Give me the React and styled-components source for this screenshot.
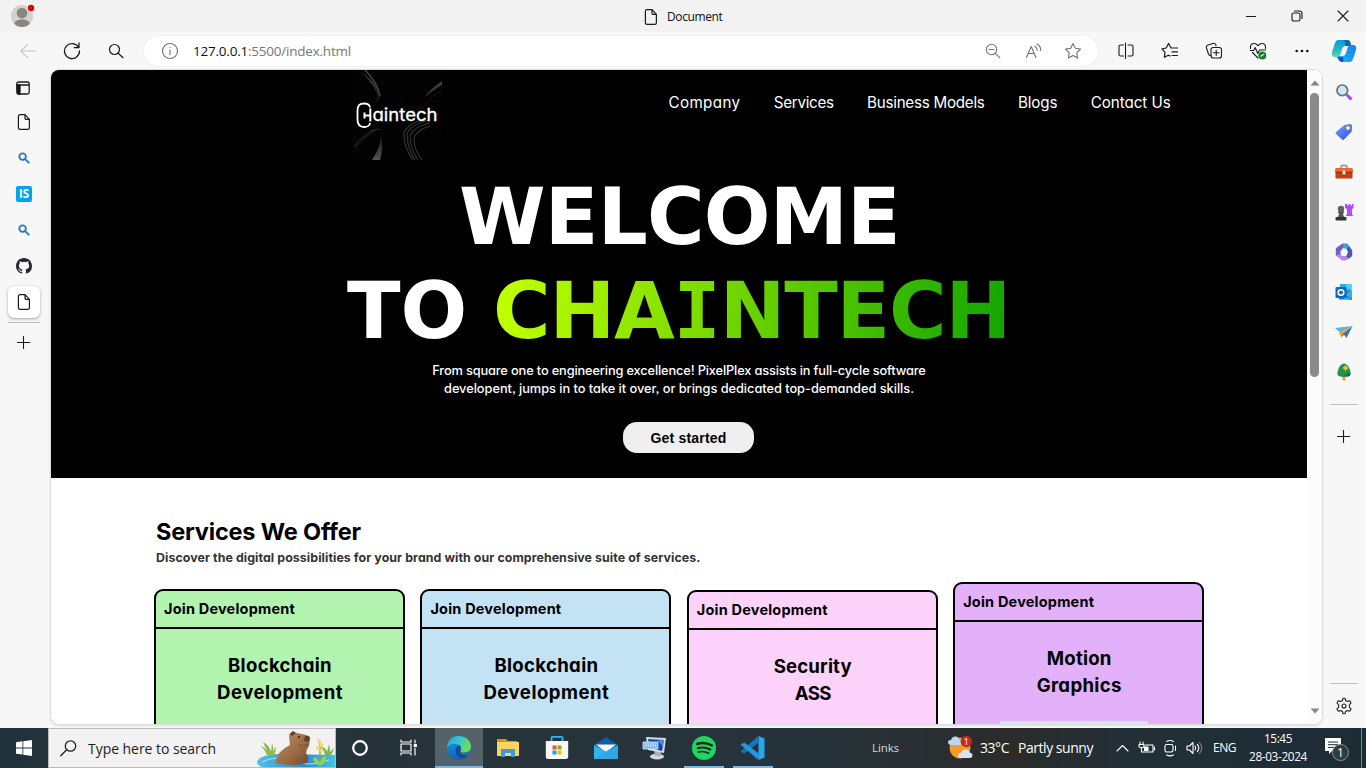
import React, { useLayoutEffect, useRef, useState } from "react";
import styled, { createGlobalStyle, css } from "styled-components";

const GlobalStyle = createGlobalStyle`
  * { box-sizing: border-box; }
  html, body { margin: 0; padding: 0; }
  body { width: 1366px; height: 768px; overflow: hidden; background: #f7f7f7; }
  svg { display: block; flex: none; }
`;

const uiFont = `"Open Sans", "Noto Sans", sans-serif`;
const siteFont = `Inter, "Open Sans", sans-serif`;

/* Text whose tracking is adjusted so that the run takes a given width. */
const Run = styled.span`
  display: inline-block;
  white-space: nowrap;
`;
function Fit({ w, children, ...rest }) {
  const ref = useRef(null);
  const [spacing, setSpacing] = useState(0);
  useLayoutEffect(() => {
    const el = ref.current;
    el.style.letterSpacing = "0px";
    const natural = el.getBoundingClientRect().width;
    setSpacing((w - natural) / el.textContent.length);
  }, [w]);
  return (
    <Run ref={ref} style={{ letterSpacing: `${spacing}px` }} {...rest}>
      {children}
    </Run>
  );
}

const Screen = styled.div`
  width: 1366px;
  height: 768px;
  display: flex;
  flex-direction: column;
  overflow: hidden;
  font-family: ${uiFont};
  color: #111;
`;

/* ---------- Browser chrome ---------- */
const TitleBar = styled.header`
  height: 32px;
  background: #f2f2f2;
  display: grid;
  grid-template-columns: 644px 1fr auto;
  align-items: center;
`;
const Profile = styled.div`
  padding-left: 10px;
`;
const TabTitle = styled.div`
  display: flex;
  align-items: center;
  gap: 9px;
  font-size: 12px;
  line-height: 16px;
  padding-top: 1px;
`;
const WindowButtons = styled.div`
  display: flex;
`;
const Slot = styled.div`
  width: ${(p) => p.$w || 44}px;
  height: ${(p) => p.$h || 32}px;
  display: flex;
  flex: none;
  align-items: center;
  justify-content: center;
`;
const Toolbar = styled.div`
  height: 38px;
  background: #f7f7f7;
  display: flex;
  align-items: center;
  padding-left: 6px;
`;
const AddressBar = styled.div`
  width: 954px;
  height: 30px;
  margin: 0 6px;
  border-radius: 15px;
  background: #fff;
  box-shadow: 0 0 2px rgba(0, 0, 0, 0.08);
  display: flex;
  align-items: center;
  padding: 0 5px 0 17px;
`;
const Url = styled.div`
  flex: 1;
  padding-left: 14px;
  font-size: 13.5px;
  line-height: 20px;
  color: #767676;
  b { font-weight: 400; color: #111; }
`;
const Middle = styled.div`
  height: 658px;
  background: #f7f7f7;
  display: flex;
`;
const LeftRail = styled.nav`
  width: 51px;
  padding: 2px 0 0 6px;
`;
const TabSlot = styled.div`
  width: ${(p) => p.$w || 36}px;
  height: ${(p) => p.$h || 36}px;
  display: flex;
  align-items: center;
  justify-content: center;
`;
const ActiveTab = styled.div`
  width: 32px;
  height: 32px;
  border-radius: 6px;
  background: #fff;
  box-shadow: 0 1px 3px rgba(0, 0, 0, 0.35);
  display: flex;
  align-items: center;
  justify-content: center;
`;
const RailLine = styled.div`
  width: ${(p) => p.$w}px;
  height: 1px;
  flex: none;
  background: #bdbdbd;
  margin: ${(p) => p.$m};
`;
const SiteBadge = styled.div`
  width: 16px;
  height: 16px;
  border-radius: 2px;
  background: #03a4ee;
  color: #fff;
  font: 700 11.5px/16px ${uiFont};
  text-align: center;
`;
const RightRail = styled.aside`
  width: 43px;
  padding-top: 2px;
  display: flex;
  flex-direction: column;
  align-items: center;
`;
const RailGap = styled.div`
  flex: 1;
`;
const Viewport = styled.main`
  width: 1271px;
  height: 654px;
  flex: none;
  border-radius: 8px;
  background: #fff;
  box-shadow: 0 0 0 1px #dedede, 0 1px 3px rgba(0, 0, 0, 0.2);
  display: flex;
  overflow: hidden;
`;
const ScrollTrack = styled.div`
  width: 15px;
  background: #fcfcfc;
  display: flex;
  flex-direction: column;
  align-items: center;
  padding: 10px 0 10px;
`;
const Thumb = styled.div`
  width: 9px;
  height: 284px;
  margin-top: 7px;
  border-radius: 5px;
  background: #8b8b8b;
`;

/* ---------- Web page ---------- */
const Page = styled.div`
  width: 1256px;
  height: 654px;
  overflow: hidden;
  font-family: ${siteFont};
  font-feature-settings: "cv11", "ss03";
  color: #000;
`;
const Hero = styled.section`
  height: 408px;
  background: #000;
  color: #fff;
`;
const HeroTop = styled.div`
  height: 90px;
  display: flex;
  padding-left: 300px;
`;
const SiteNav = styled.nav`
  display: flex;
  gap: 33.3px;
  padding: 23px 0 0 226.5px;
  font-size: 15.2px;
  line-height: 20px;
`;
const Headline = styled.h1`
  margin: 10px 0 0;
  font: 700 78.5px/94px "DejaVu Sans", sans-serif;
  text-align: left;
`;
const HeadLine = styled.div`
  height: 94px;
  padding-left: ${(p) => p.$x}px;
  white-space: nowrap;
`;
const Gradient = styled.span`
  display: inline-block;
  margin-left: ${(p) => p.$gap || 0}px;
  background: linear-gradient(98deg, #bfff00 3%, #66d000 52%, #10a400 100%);
  background-clip: text;
  -webkit-background-clip: text;
  color: transparent;
`;
const SerifI = styled.span`
  font-family: "DejaVu Sans Mono", monospace;
`;
const Lead = styled.p`
  margin: 4px 0 0;
  font-size: 12.8px;
  font-weight: 500;
  line-height: 18px;
  text-align: center;
`;
const HeroAction = styled.div`
  padding: 24px 0 0 572px;
`;
const StartButton = styled.button`
  display: block;
  width: 131px;
  height: 31px;
  padding: 1px 0 0;
  border: 0;
  border-radius: 14px;
  background: #efefef;
  color: #000;
  font: 700 14px/30px "Liberation Sans", Arial, sans-serif;
`;
const Services = styled.section`
  padding: 36px 0 0 103px;
`;
const ServicesTitle = styled.h2`
  margin: 0 0 0 2px;
  font-size: 23.5px;
  font-weight: 700;
  line-height: 36px;
`;
const ServicesText = styled.p`
  margin: -1px 0 0 2px;
  font-size: 12.4px;
  font-weight: 700;
  line-height: 18px;
  color: #333;
`;
const Cards = styled.div`
  display: flex;
  gap: 15.4px;
  padding-top: 15px;
`;
const Card = styled.article`
  width: 251px;
  height: 240px;
  flex: none;
  margin-top: ${(p) => p.$top}px;
  border: 2px solid #000;
  border-radius: 9px;
  background: ${(p) => p.$bg};
`;
const CardHead = styled.div`
  height: 38px;
  padding: 0 0 0 8px;
  border-bottom: 2px solid #000;
  font-size: 14.5px;
  font-weight: 700;
  line-height: 36px;
`;
const CardBody = styled.div`
  padding: 23px 0 0 1px;
  font-size: 18.6px;
  font-weight: 700;
  line-height: 27px;
  text-align: center;
`;
const CardImage = styled.div`
  width: 148px;
  height: 40px;
  margin: 22px 0 0 45px;
  background: linear-gradient(90deg, #cde8f8, #d3e6fd);
`;

/* ---------- Taskbar ---------- */
const Taskbar = styled.footer`
  height: 40px;
  background: linear-gradient(90deg, #22323b 0%, #27343a 35%, #26333a 60%, #2b2b2a 74%, #222f36 82%, #1c2c35 100%);
  color: #fff;
  display: flex;
  align-items: stretch;
`;
const TaskSearch = styled.div`
  width: 288px;
  border: 1px solid #b9b9b9;
  background: #f2f2f2;
  color: #222;
  display: flex;
  align-items: center;
  padding-left: 11px;
  font-size: 14px;
  svg + span { margin-left: 11px; }
  span + svg { margin-left: auto; }
`;
const TaskSlot = styled.div`
  width: ${(p) => p.$w || 49}px;
  height: 40px;
  flex: none;
  display: flex;
  align-items: center;
  justify-content: center;
  ${(p) => p.$active && css`background: #566269;`}
`;
const TaskInner = styled.div`
  width: ${(p) => p.$line || 48}px;
  height: 40px;
  display: flex;
  align-items: center;
  justify-content: center;
  border-bottom: 2px solid ${(p) => (p.$line ? "#76b9ed" : "transparent")};
  padding-top: 2px;
`;
const Tray = styled.div`
  flex: 1;
  display: flex;
  align-items: center;
  padding-left: 95px;
  font-size: 12px;
`;
const TrayItem = styled.div`
  margin-left: ${(p) => p.$ml || 0}px;
  font-size: ${(p) => p.$size || 12}px;
  line-height: 18px;
  color: ${(p) => p.$color || "#fff"};
  text-align: center;
`;
const Clock = styled(TrayItem)`
  padding-bottom: 2px;
`;
const ShowDesktop = styled.div`
  width: 5px;
  height: 40px;
  margin-left: auto;
  border-left: 1px solid #76848b;
`;

/* ---------- Icons ---------- */
const Svg = ({ w = 16, h = w, vb = `0 0 ${w} ${h}`, c = "#1b1b1b", s = 1.1, children }) => (
  <svg width={w} height={h} viewBox={vb} fill="none" stroke={c} strokeWidth={s} strokeLinecap="round" strokeLinejoin="round">
    {children}
  </svg>
);
const DocIcon = ({ w = 14 }) => (
  <Svg w={w} h={16} vb="0 0 14 16" s={1.2}>
    <path d="M3 .7h5l4.4 4.6v8.4q0 1.6-1.6 1.6H3q-1.6 0-1.6-1.6V2.3Q1.4.7 3 .7ZM8 .9v3.2q0 1.3 1.3 1.3h3" />
  </Svg>
);
const BlueSearch = () => (
  <Svg w={12} c="#1f74cf" s={1.8}><circle cx="4.6" cy="4.6" r="3.3" /><path d="m7.2 7.2 3.6 3.4" /></Svg>
);
const Plus = () => <Svg w={13} s={1.1}><path d="M6.5.5v12M.5 6.500h12" /></Svg>;
const Arrow = ({ down }) => (
  <svg width="10" height="6" viewBox="0 0 10 6"><path d={down ? "M.5.5h9L5 5.5Z" : "M.5 5.5h9L5 .5Z"} fill="#868686" /></svg>
);
const Avatar = () => (
  <svg width="26" height="26" viewBox="0 0 26 26">
    <defs><clipPath id="face"><circle cx="12" cy="13" r="11" /></clipPath></defs>
    <circle cx="12" cy="13" r="11" fill="#d3d0cd" />
    <g clipPath="url(#face)" fill="#8b8580"><circle cx="12" cy="10" r="5.3" /><ellipse cx="12" cy="21.8" rx="8" ry="5.6" /></g>
    <circle cx="21" cy="5" r="4" fill="#f2f2f2" /><circle cx="21" cy="5" r="3.2" fill="#e3000b" />
  </svg>
);
const Github = () => (
  <svg width="16" height="16" viewBox="0 0 16 16" fill="#24292f">
    <path d="M8 0C3.58 0 0 3.58 0 8c0 3.54 2.29 6.53 5.47 7.59.4.07.55-.17.55-.38 0-.19-.01-.82-.01-1.49-2.01.37-2.53-.49-2.69-.94-.09-.23-.48-.94-.82-1.13-.28-.15-.68-.52-.01-.53.63-.01 1.08.58 1.23.82.72 1.21 1.87.87 2.33.66.07-.52.28-.87.51-1.07-1.78-.2-3.64-.89-3.64-3.95 0-.87.31-1.59.82-2.15-.08-.2-.36-1.02.08-2.12 0 0 .67-.21 2.2.82a7.6 7.6 0 0 1 4 0c1.53-1.04 2.2-.82 2.2-.82.44 1.1.16 1.92.08 2.12.51.56.82 1.27.82 2.15 0 3.07-1.87 3.75-3.65 3.95.29.25.54.73.54 1.48 0 1.07-.01 1.93-.01 2.2 0 .21.15.46.55.38A8 8 0 0 0 16 8c0-4.42-3.58-8-8-8Z" />
  </svg>
);
const Copilot = () => (
  <svg width="26" height="24" viewBox="0 0 26 24">
    <defs>
      <linearGradient id="cpA" x1="0" y1="0" x2="0" y2="1"><stop stopColor="#1399d8" /><stop offset=".55" stopColor="#20b8c7" /><stop offset="1" stopColor="#62d493" /></linearGradient>
      <linearGradient id="cpB" x1="1" y1="0" x2="0" y2="1"><stop stopColor="#157fea" /><stop offset=".6" stopColor="#1d9df4" /><stop offset="1" stopColor="#20c4f2" /></linearGradient>
    </defs>
    <path d="M7 1h9q3 0 3.5 3l.8 3H14q-2 0-3 3l-1.500 5q-1 3-3.500 3H4q-4 0-3-5L4 4q.8-3 3-3Z" fill="url(#cpA)" />
    <path d="M12 1h4q3 0 3.500 3l.8 3H14q1-5-2-6Z" fill="#1165a8" />
    <path d="M19 6h3q4 0 3 5l-3 9q-.8 3-3 3h-8q-3 0-3.500-3L7 17h5q2 0 3-3l1.500-5q.8-3 2.500-3Z" fill="url(#cpB)" />
    <path d="M6 18h6q1 3 0 5-3 0-4-2Z" fill="#1b45d4" />
  </svg>
);
const SideSearch = () => (
  <svg width="18" height="18" viewBox="0 0 18 18">
    <path d="m11 11 2 2" stroke="#777" strokeWidth="2" />
    <path d="m12.800 12.800 2.700 2.700" stroke="#b63df0" strokeWidth="3" strokeLinecap="round" />
    <circle cx="7.300" cy="7.300" r="5.300" fill="#c9e9fb" stroke="#6e6e6e" strokeWidth="1.700" />
  </svg>
);
const TagIcon = () => (
  <svg width="18" height="18" viewBox="0 0 18 18">
    <defs><linearGradient id="tg" x1="0" y1="0" x2="1" y2="1"><stop stopColor="#6aa8ff" /><stop offset="1" stopColor="#3549ec" /></linearGradient></defs>
    <path d="M9.500 2 15 1q2 0 2 2l-.3 5.500L9 16.500q-1 1-2 0L1 11q-1-1 0-2Z" fill="url(#tg)" /><circle cx="13" cy="5" r="1.800" fill="#fff" stroke="#f7c42b" />
  </svg>
);
const Toolbox = () => (
  <svg width="18" height="16" viewBox="0 0 18 16">
    <path d="M6 4V2.500Q6 1.500 7 1.500h4q1 0 1 1V4" fill="none" stroke="#8b8b8b" strokeWidth="1.300" />
    <rect x=".5" y="4" width="17" height="10.500" rx="1.200" fill="#c43d13" /><path d="M.5 8V5.200Q.5 4 1.700 4h14.600q1.200 0 1.200 1.200V8Z" fill="#e96a33" /><path d="M.5 7.700h17v1H.5z" fill="#8e2809" /><rect x="7.500" y="6.600" width="3" height="4" rx="1" fill="#e4e4e4" />
  </svg>
);
const Chess = () => (
  <svg width="20" height="20" viewBox="0 0 20 20">
    <path d="M11 2h2v1.500h1.500V2h2v1.500H18V2h1.500v4l-1.500 1v5l1.200 2h-7.500L13 12V7l-2-1Z" fill="#b34bf3" />
    <circle cx="7" cy="7" r="3.200" fill="#626262" /><path d="M4 9.500h6v1.500H9q0 3 2 4.500H3q2-1.500 2-4.500H4Z" fill="#555" /><rect x="1.500" y="15" width="11" height="3.500" rx="1" fill="#333" />
  </svg>
);
const M365 = () => (
  <svg width="18" height="18" viewBox="0 0 18 18">
    <path d="M7.500.5h5L17 7.500V9l-4 1-2-3.500-3.500-1L5.500 8Z" fill="#3d9be8" />
    <path d="M7.500.5Q9 2 7.500 5.500L5.700 8.500v4L3.500 14 .8 12.500V5.200Z" fill="#6a62c5" />
    <path d="m.8 12 3.700-.8 3 1.800h4.500l3.500 1.500-4.500 3H7Z" fill="#b68ae0" />
    <path d="M12.500 9.500 11.500 6 14 3l3.200 4.500V13l-3.200 2.500-3-2.300Z" fill="#4a58a8" />
    <path d="M7.500 5.500h3.700L13 9l-1.800 3.700H7.300L5.400 9Z" fill="#f7f7f7" />
  </svg>
);
const Outlook = () => (
  <svg width="18" height="18" viewBox="0 0 18 18">
    <path d="M5 1h11.500v9H5Z" fill="#2ea8e5" /><path d="M11 1h5.500v5H11Z" fill="#50d0f5" /><path d="m4 9 13-1v8.500H4Z" fill="#1479c9" /><path d="m9 12 8-5v9.500H9Z" fill="#2fb2ed" /><path d="m8 11 9 5.500" stroke="#0f64ad" />
    <rect x=".5" y="4" width="11" height="11" rx="1" fill="#0f69bd" /><circle cx="6" cy="9.500" r="2.800" fill="none" stroke="#fff" strokeWidth="1.600" />
  </svg>
);
const Plane = () => (
  <svg width="18" height="16" viewBox="0 0 18 16">
    <path d="M0 4 17.500 2 5.500 9Z" fill="#4eb7f4" /><path d="m17.500 2-6 12-3.500-4.500Z" fill="#2176d8" /><path d="M17.500 2 4 8l2 5.500L8 9.500Z" fill="#f3a51f" /><path d="m6 13.500 3.500-3L8 9Z" fill="#b9690a" />
  </svg>
);
const Tree = () => (
  <svg width="16" height="18" viewBox="0 0 16 18">
    <path d="M6.500 12h3v5q-1.500 1-3 0Z" fill="#f0a01e" /><path d="M8 .5Q12 1 14 7q2 6-2.500 6.500h-7Q0 13 2 7 4 1 8 .5Z" fill="#269149" /><path d="M5 13.500q6-1 9.300-4 .5 3.800-2.800 4Z" fill="#14683a" /><path d="m9.500 2.500.8 1.700L12 5l-1.700.8-.8 1.700-.8-1.700L7 5l1.700-.8Z" fill="#fbc82e" stroke="#fbc82e" />
  </svg>
);
const Gear = () => (
  <Svg w={18}>
    <circle cx="9" cy="9" r="2" />
    <path d="M7.500 3.500 8 1.200h2l.5 2.300 1.800 1 2.400-.8 1.300 2.100L14.300 8v2l1.700 2.200-1.300 2.100-2.400-.8-1.800 1-.5 2.300H8l-.5-2.300-1.800-1-2.400.8L2 12.200 3.700 10V8L2 5.800l1.300-2.100 2.400.8Z" />
  </Svg>
);

const Logo = () => (
  <svg width="91" height="90" viewBox="0 0 91 90">
    <defs>
      <linearGradient id="rib" x1="0" y1="0" x2="1" y2="1"><stop stopColor="#111" /><stop offset=".5" stopColor="#3b3838" /><stop offset="1" stopColor="#101010" /></linearGradient>
      <linearGradient id="beam" x1="0" y1="0" x2="0" y2="1"><stop stopColor="#0c0c0c" /><stop offset="1" stopColor="#565353" /></linearGradient>
    </defs>
    <rect x="1" width="90" height="90" fill="#020202" />
    <path d="M6 0q22 12 23 27-1 4-5 6 4-5 2-9Q21 10 6 0Z" fill="url(#rib)" />
    <path d="M14 0q13 13 15 26" fill="none" stroke="#444141" strokeWidth="1.500" />
    <path d="M91 11Q79 19 74 27 84 19 91 15Z" fill="#3c3939" /><path d="M91 20q-9 5-18 16-8 5-13 5" fill="none" stroke="#191818" />
    <path d="M3 76q12-14 23-17-12 7-23 19M19 61q8-3 11-1" fill="none" stroke="#282626" />
    <path d="M21 90q9-13 9-27 3 15-1 27Z" fill="url(#beam)" />
    <g fill="none" stroke="#363333" strokeWidth="1.100">
      <path d="M75 48q-18 6-22 14-1 14 9 28M78 50Q59 55 56 64q0 13 8 26M79 53Q62 57 59 66q0 12 8 24M79 56Q66 60 63 68q0 12 8 22" />
    </g>
    <path d="M19 37.500q-.5-4-6-4-6.500 0-6.500 7v9q0 7.500 6.500 7.500 5.500 0 6-4" fill="none" stroke="#fff" strokeWidth="1.800" />
    <path d="M13.500 42.500v6M13.500 45.500H19M19.300 38.500v13" stroke="#fff" strokeWidth="2" />
    <text x="21.500" y="51" textLength="65" lengthAdjust="spacingAndGlyphs" fill="#fff" stroke="#fff" strokeWidth=".3" fontFamily="Inter, sans-serif" fontSize="17.500">aintech</text>
  </svg>
);

const Capybara = () => (
  <svg width="79" height="38" viewBox="0 0 79 38">
    <defs>
      <linearGradient id="wat" x1="0" y1="0" x2="1" y2="0"><stop stopColor="#55bde7" /><stop offset=".6" stopColor="#2c8bcd" /><stop offset="1" stopColor="#40c6df" /></linearGradient>
      <linearGradient id="fur" x1="0" y1="0" x2="1" y2="1"><stop stopColor="#bd9161" /><stop offset=".6" stopColor="#9b6b43" /><stop offset="1" stopColor="#6e4628" /></linearGradient>
    </defs>
    <path d="M1 33q2-7 22-8l56 1v12H6q-5-2-5-5Z" fill="url(#wat)" /><path d="M6 33q12-6 24-3M45 34q12 3 28-3" stroke="#aee6f5" fill="none" />
    <path d="M11 26Q7 17 3 17q6 0 9 7L7 13q6 3 8 10l1-9q2 5 1 9l3-6q0 5-2 9Z" fill="#8abb45" />
    <path d="M69 26q-1-6-5-8 6 0 7 5l2-8q1 4 1 8l4-4q-1 5-3 7Z" fill="#7fb84c" />
    <path d="M19 34q2-12 15-18l-1-9q0-3 3-4l10 2q7 1 8 5l-1 7q-3 4-3 7 4 5 1 10-14 4-32 0Z" fill="url(#fur)" />
    <path d="m34 5 3-3 3 2-4 3ZM49 7q5-1 5 3l-2 3-4-1Z" fill="#5f3e2a" /><circle cx="43" cy="8" r="1" fill="#221" /><path d="M42 16q6 1 10-1" stroke="#79512f" fill="none" />
    <path d="M64 36V14" stroke="#7ab64b" strokeWidth="1.500" /><path d="M64 37q-8-3-6-9 5 1 6 9 0-9 6-10 0 8-6 10Z" fill="#9bcb5d" />
    <g fill="#f8d777"><circle cx="63" cy="12" r="2" /><circle cx="65.500" cy="16" r="2.100" /><circle cx="62" cy="19" r="2.100" /><circle cx="65.500" cy="22" r="1.800" /></g>
  </svg>
);
const EdgeIcon = () => (
  <svg width="24" height="24" viewBox="0 0 24 24">
    <defs>
      <linearGradient id="eg1" x1="0" y1="0" x2="1" y2=".4"><stop stopColor="#199cdc" /><stop offset=".5" stopColor="#36c6d7" /><stop offset="1" stopColor="#67e052" /></linearGradient>
      <linearGradient id="eg2" x1="0" y1="0" x2="0" y2="1"><stop stopColor="#1c9de2" /><stop offset="1" stopColor="#0d62bc" /></linearGradient>
    </defs>
    <circle cx="12" cy="12" r="12" fill="url(#eg2)" />
    <path d="M0 11Q1 0 12 0q11 1 12 10 0 6-7 6.500-4 0-3.500-2 1.500-2-.5-4.500-5-5-13 1Z" fill="url(#eg1)" />
    <path d="M13 9q-5 1-4.500 6 1 7 8 7.500 3-1 5.500-4.500-9 2-8.500-4 .8-2-.5-5Z" fill="#154b94" /><path d="M13.700 14q-1 4 4 4.500 3 0 5.500-1.500l-.8 1.800q-6 2-9-1-1.500-2 .3-3.800Z" fill="#566269" />
  </svg>
);
const Folder = () => (
  <svg width="24" height="20" viewBox="0 0 24 20">
    <path d="M1 1h9l2 2h9v4H1Z" fill="#dd9510" /><path d="M1 4h22v14H1Z" fill="#fcd262" /><path d="M5 11h14v8h-4v-4H9v4H5Z" fill="#3d9bdc" />
  </svg>
);
const Store = () => (
  <svg width="24" height="24" viewBox="0 0 24 24">
    <path d="M6.500 6V1.700q0-.8.800-.8h9.400q.8 0 .8.800V6" fill="none" stroke="#33b5ea" strokeWidth="1.800" /><path d="M.8 5h22.400v15.500q0 2.500-2.500 2.500H3.300Q.8 23 .8 20.500Z" fill="#f7f7f7" />
    <path fill="#ee4f24" d="M7.500 9.500h4v4h-4z" /><path fill="#7eb900" d="M12.500 9.500h4v4h-4z" /><path fill="#19a2eb" d="M7.500 14.500h4v4h-4z" /><path fill="#fdb900" d="M12.500 14.500h4v4h-4z" />
  </svg>
);
const Mail = () => (
  <svg width="24" height="24" viewBox="0 0 24 24"><path d="M0 9 12 1l12 8-12 6Z" fill="#0d5ba9" /><path d="M2 8.500h20l-10 8Z" fill="#f5f5f5" /><path d="m0 9 12 6.500L24 9v14H0Z" fill="#32b4ef" /><path d="m0 23 12-7.500L24 9v14Z" fill="#2799de" opacity=".5" /></svg>
);
const Computer = () => (
  <svg width="26" height="24" viewBox="0 0 26 24">
    <ellipse cx="15" cy="20.500" rx="7" ry="3" fill="#d5d7d8" /><path d="m12 14 7 1v5h-6Z" fill="#a9afb3" /><path d="m4 1 20 1-2 15L6 14Z" fill="#d5dde5" /><path d="m6 3 16 1-2 11L8 12Z" fill="#173fb4" /><path d="m15 3.500 7 .5-1 7Z" fill="#4b86ee" /><path d="M1 6h15v7H1Z" fill="#79b7e5" stroke="#e3f1fb" strokeWidth=".8" /><path d="M3 8h11M3 10h11" stroke="#f1f8ff" strokeDasharray="1.500 1" />
  </svg>
);
const Spotify = () => (
  <svg width="24" height="24" viewBox="0 0 24 24"><circle cx="12" cy="12" r="12" fill="#1ed760" /><g fill="none" stroke="#15251b" strokeLinecap="round"><path d="M5 8q8-2.500 15 1.500" strokeWidth="2.400" /><path d="M5.800 12.200q6.500-2 12.500 1.300" strokeWidth="2" /><path d="M6.300 16q5.500-1.500 10.300 1.200" strokeWidth="1.600" /></g></svg>
);
const VsCode = () => (
  <svg width="24" height="24" viewBox="0 0 24 24"><path d="m17.500 0 6 2.500v19l-6 2.500Z" fill="#27a7ec" /><path d="m17.500 0 .3 6.500L3.200 17.500.3 16q-.6-.7 0-1.300Z" fill="#1277bd" /><path d="m17.500 24 .3-6.500L3.200 6.500.3 8q-.6.700 0 1.300Z" fill="#2496dc" /></svg>
);
const Weather = () => (
  <svg width="26" height="24" viewBox="0 0 26 24">
    <circle cx="12" cy="12" r="10.500" fill="#f59c24" /><path d="M3 9q-3 0-3-3 0-2 3-2 1-4 5-3.500 3 .5 3.500 3.500 2.500 0 2.500 3 0 2-2 2Z" fill="#bdd5f4" /><path d="M13 22q-3 0-3-2.500T13 17q1-4 5-3.500 3 0 3.500 3 3 .5 3 3t-3 2.500Z" fill="#d6e5fa" />
    <circle cx="18.300" cy="5.500" r="5.700" fill="#c42b1c" /><text x="18.300" y="9" fill="#fff" fontSize="9.500" textAnchor="middle" fontFamily="Open Sans, sans-serif">1</text>
  </svg>
);

const cards = [
  { bg: "#b2f3b0", top: 7, lines: [["Blockchain", 104], ["Development", 126]] },
  { bg: "#c3e2f4", top: 7, lines: [["Blockchain", 104], ["Development", 126]] },
  { bg: "#fdd3fc", top: 8, lines: [["Security", 78], ["ASS", 36]] },
  { bg: "#e2b1f9", top: 0, lines: [["Motion", 65], ["Graphics", 85]], image: true },
];

export default function App() {
  return (
    <Screen>
      <GlobalStyle />
      <TitleBar>
        <Profile><Avatar /></Profile>
        <TabTitle><DocIcon /><Fit w={55.500}>Document</Fit></TabTitle>
        <WindowButtons>
          <Slot $w={46}><Svg w={10}><path d="M0 5.500h10" /></Svg></Slot>
          <Slot $w={46}><Svg w={12}><rect x="1" y="3" width="8" height="8" rx="1.700" /><path d="M3.500 1h5Q11 1 11 3.500v5" /></Svg></Slot>
          <Slot $w={46}><Svg w={12}><path d="m1 1 10 10M11 1 1 11" /></Svg></Slot>
        </WindowButtons>
      </TitleBar>

      <Toolbar>
        <Slot><Svg w={16} c="#c6c6c6"><path d="M15.500 8H.8M7.500 1.300.8 8l6.700 6.700" /></Svg></Slot>
        <Slot><Svg w={18} s={1.300}><path d="M15.600 5.500A7.500 7.500 0 1 0 16.500 9M16 1v4.700h-4.700" /></Svg></Slot>
        <Slot><Svg w={16} s={1.200}><circle cx="6.500" cy="6.500" r="5" /><path d="m10.200 10.200 4.800 4.500" /></Svg></Slot>
        <AddressBar>
          <Svg w={18} c="#737373"><circle cx="9" cy="9" r="7.500" /><path d="M9 8v4.700M9 5.300v.3" /></Svg>
          <Url><Fit w={158}><b>127.0.0.1</b>:5500/index.html</Fit></Url>
          <Slot $w={40}><Svg w={16} c="#747474"><circle cx="6.500" cy="6.500" r="5.200" /><path d="m10.300 10.300 4.500 4.300M4 6.500h5" /></Svg></Slot>
          <Slot $w={40}><Svg w={17} c="#747474"><path d="m1.500 14.500 4.700-11 4.700 11M3.200 10.500h6M10 3.300q2.200 1.500 2.200 4M12 1q4 2.300 3.700 6.500" /></Svg></Slot>
          <Slot $w={40}><Svg w={18} c="#747474"><path d="m9 1.500 2.300 4.800 5.200.8-3.700 3.700.8 5.300L9 13.600l-4.600 2.500.8-5.300L1.500 7.100l5.200-.8Z" /></Svg></Slot>
        </AddressBar>
        <Slot><Svg w={18}><path d="M6.500 3H3.500Q2 3 2 4.500v8Q2 14 3.500 14h3M11 3h3.500Q16 3 16 4.500v8q0 1.500-1.500 1.500H11M8.500 1v15.500" /></Svg></Slot>
        <Slot><Svg w={18} s={1.200}><path d="M10 5.800 7.500 1.500 5.200 6 1 6.800l3 3.500-.7 5 4-2.100 1.700.7M10 6h6.500M11 9.800h5.500M11 13.500h5.500" /></Svg></Slot>
        <Slot><Svg w={18}><path d="M6 13.500q-1.800.3-2.500-1.500L1.300 5.500Q.8 4 2.500 3.300l6-2Q10 .9 10.700 2.500l.3 1.300" /><rect x="6" y="5.500" width="10.500" height="10.500" rx="2.300" /><path d="M11.200 8v5.500M8.500 10.800H14" /></Svg></Slot>
        <Slot><Svg w={18}><path d="M1.500 6.500Q1 1.500 5 1.500q2.500 0 4 2.200 1.500-2.200 4-2.200 4 0 3.500 5M1.200 8.500h3.500l1.500-3 2.500 6L10.500 8h6M3.500 10.500l5.500 5.500" /><circle cx="13.300" cy="13.500" r="4" fill="#12802c" stroke="none" /><path d="m11.700 14.200 3-1.800" stroke="#fff" /></Svg></Slot>
        <Slot><Svg w={14} h={4}><g fill="#111" stroke="none"><circle cx="1.700" cy="2" r="1.300" /><circle cx="7" cy="2" r="1.300" /><circle cx="12.300" cy="2" r="1.300" /></g></Svg></Slot>
        <Slot $w={40}><Copilot /></Slot>
      </Toolbar>

      <Middle>
        <LeftRail>
          <TabSlot $h={32} $w={34}><Svg w={14} s={1.300}><rect x=".8" y="1" width="12.400" height="12" rx="1.800" /><path d="M1 4h12" /><path d="M1 4h3v9H2Z" fill="#111" /></Svg></TabSlot>
          <TabSlot><DocIcon /></TabSlot>
          <TabSlot><BlueSearch /></TabSlot>
          <TabSlot><SiteBadge>IS</SiteBadge></TabSlot>
          <TabSlot><BlueSearch /></TabSlot>
          <TabSlot><Github /></TabSlot>
          <TabSlot><ActiveTab><DocIcon /></ActiveTab></TabSlot>
          <RailLine $w={32} $m="2px 0 0 2px" />
          <TabSlot $h={39} $w={35}><Plus /></TabSlot>
        </LeftRail>

        <Viewport>
          <Page>
            <Hero>
              <HeroTop>
                <Logo />
                <SiteNav>
                  <Fit w={72}>Company</Fit>
                  <Fit w={60}>Services</Fit>
                  <Fit w={117.500}>Business Models</Fit>
                  <Fit w={39.500}>Blogs</Fit>
                  <Fit w={80}>Contact Us</Fit>
                </SiteNav>
              </HeroTop>
              <Headline>
                <HeadLine $x={408}><Fit w={441}>WELCOME</Fit></HeadLine>
                <HeadLine $x={296}>
                  <Fit w={120}>TO</Fit>
                  <Gradient $gap={26}><Fit w={517}>CHA<SerifI>I</SerifI>NTECH</Fit></Gradient>
                </HeadLine>
              </Headline>
              <Lead>
                <Fit w={493.500}>From square one to engineering excellence! PixelPlex assists in full-cycle software</Fit>
                <br />
                <Fit w={470}>developent, jumps in to take it over, or brings dedicated top-demanded skills.</Fit>
              </Lead>
              <HeroAction><StartButton><Fit w={76}>Get started</Fit></StartButton></HeroAction>
            </Hero>
            <Services>
              <ServicesTitle><Fit w={205}>Services We Offer</Fit></ServicesTitle>
              <ServicesText><Fit w={544.500}>Discover the digital possibilities for your brand with our comprehensive suite of services.</Fit></ServicesText>
              <Cards>
                {cards.map((card, i) => (
                  <Card key={i} $bg={card.bg} $top={card.top}>
                    <CardHead><Fit w={131}>Join Development</Fit></CardHead>
                    <CardBody>
                      {card.lines.map(([text, w]) => <div key={text}><Fit w={w}>{text}</Fit></div>)}
                    </CardBody>
                    {card.image && <CardImage />}
                  </Card>
                ))}
              </Cards>
            </Services>
          </Page>
          <ScrollTrack><Arrow /><Thumb /><RailGap /><Arrow down /></ScrollTrack>
        </Viewport>

        <RightRail>
          <Slot $h={40}><SideSearch /></Slot>
          <Slot $h={40}><TagIcon /></Slot>
          <Slot $h={40}><Toolbox /></Slot>
          <Slot $h={40}><Chess /></Slot>
          <Slot $h={40}><M365 /></Slot>
          <Slot $h={40}><Outlook /></Slot>
          <Slot $h={40}><Plane /></Slot>
          <Slot $h={40}><Tree /></Slot>
          <RailLine $w={28} $m="12px 0 11px" />
          <Slot $h={41}><Plus /></Slot>
          <RailGap />
          <RailLine $w={28} $m="0" />
          <Slot $h={44}><Gear /></Slot>
        </RightRail>
      </Middle>

      <Taskbar>
        <TaskSlot $w={48}>
          <svg width="16" height="16" viewBox="0 0 16 16" fill="#fff"><path d="m0 2.200 6.500-.9v6.200H0ZM7.300 1.200 16 0v7.500H7.300ZM0 8.400h6.500v6.200L0 13.700ZM7.300 8.400H16V16l-8.700-1.300Z" /></svg>
        </TaskSlot>
        <TaskSearch>
          <Svg w={17} c="#222" s={1.300}><circle cx="10.500" cy="6" r="5.200" /><path d="m6.700 9.800-6 6" /></Svg>
          <Fit w={128}>Type here to search</Fit>
          <Capybara />
        </TaskSearch>
        <TaskSlot $w={48}><Svg w={18} c="#fff" s={2.200}><circle cx="9" cy="9" r="6.800" /></Svg></TaskSlot>
        <TaskSlot $w={51}><Svg w={20} h={18} c="#fff" s={1.200}><path d="M1 1v2h10V1M1 5h10v7H1ZM1 16v-2h10v2M15 1v3M15 9v7" /><rect x="14.300" y="5.500" width="2" height="2" fill="#fff" /></Svg></TaskSlot>
        <TaskSlot $w={48} $active><TaskInner $line={48}><EdgeIcon /></TaskInner></TaskSlot>
        <TaskSlot><TaskInner><Folder /></TaskInner></TaskSlot>
        <TaskSlot><TaskInner><Store /></TaskInner></TaskSlot>
        <TaskSlot><TaskInner><Mail /></TaskInner></TaskSlot>
        <TaskSlot><TaskInner><Computer /></TaskInner></TaskSlot>
        <TaskSlot><TaskInner $line={40}><Spotify /></TaskInner></TaskSlot>
        <TaskSlot><TaskInner $line={40}><VsCode /></TaskInner></TaskSlot>
        <Tray>
          <TrayItem $color="#d5d8da" $size={11.500}><Fit w={27}>Links</Fit></TrayItem>
          <TrayItem $ml={49}><Weather /></TrayItem>
          <TrayItem $ml={6} $size={14}><Fit w={29}>33°C</Fit></TrayItem>
          <TrayItem $ml={9} $size={14}><Fit w={75}>Partly sunny</Fit></TrayItem>
          <TrayItem $ml={23}><Svg w={13} h={8} c="#fff"><path d="m1 7 5.500-5.500L12 7" /></Svg></TrayItem>
          <TrayItem $ml={9}><Svg w={18} h={14} c="#fff"><path d="M2 1v2M5 1v2M1 3.500h5v2.200q-2.500 2-5 0ZM3.500 7v4H15V4H7.500M16.500 6v3" /><path d="M6.500 6H10v3.500H6.500Z" fill="#fff" /></Svg></TrayItem>
          <TrayItem $ml={8}><Svg w={14} h={18} c="#fff"><rect x="1" y="5.500" width="8" height="7.500" rx="1.700" /><path d="M11.500 7v4.500M2.500 2.500q3.500-2 7 0M2.500 16q3.500 1.700 7 0" /></Svg></TrayItem>
          <TrayItem $ml={8}><Svg w={17} h={14} c="#fff"><path d="M1 5h2.500L7 1.500v11L3.500 9H1ZM9 5q1.500 2 0 4M11.300 3.300q3 3.700 0 7.400" /><path d="M13.500 1.500q4.500 5.500 0 11" stroke="#7d888e" /></Svg></TrayItem>
          <TrayItem $ml={10}><Fit w={23}>ENG</Fit></TrayItem>
          <Clock $ml={13} $size={11.800}><Fit w={28}>15:45</Fit><br /><Fit w={58}>28-03-2024</Fit></Clock>
          <TrayItem $ml={17}>
            <svg width="26" height="26" viewBox="0 0 26 26"><path d="M1 3h16v13H8l-3 3v-3H1Z" fill="#fff" /><path d="M4 7h10M4 9.700h10M4 12.400h6" stroke="#1c2c35" /><circle cx="16.500" cy="17.500" r="8" fill="#333a3e" stroke="#8b9296" /><text x="16.500" y="22" fill="#fff" fontSize="12" textAnchor="middle" fontFamily="Open Sans, sans-serif">1</text></svg>
          </TrayItem>
          <ShowDesktop />
        </Tray>
      </Taskbar>
    </Screen>
  );
}
